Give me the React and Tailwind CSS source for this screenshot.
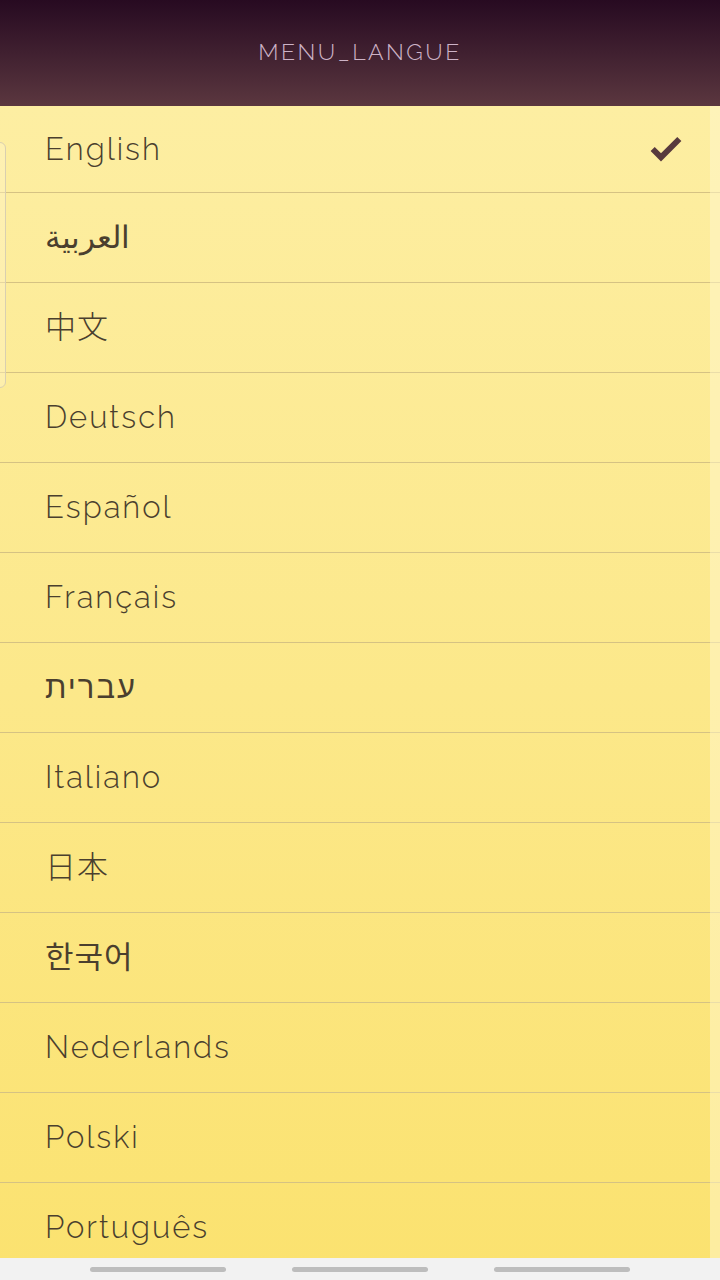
import { Check } from "lucide-react";

const langues = [
  { nom: "English" },
  { nom: "العربية", poids: "font-light", ls: "tracking-normal" },
  { nom: "中文", ls: "tracking-[1px]" },
  { nom: "Deutsch" },
  { nom: "Español" },
  { nom: "Français" },
  { nom: "עברית", poids: "font-normal", ls: "tracking-[2px]" },
  { nom: "Italiano" },
  { nom: "日本", ls: "tracking-[1px]" },
  { nom: "한국어", poids: "font-normal", ls: "tracking-[1px]" },
  { nom: "Nederlands" },
  { nom: "Polski" },
  { nom: "Português" },
];

export default function App() {
  return (
    <div
      className="relative w-[720px] h-[1280px] overflow-hidden flex flex-col"
      style={{ fontFamily: "Raleway, Lato, 'Noto Sans', 'Noto Sans CJK JP', 'Noto Sans CJK KR', sans-serif" }}
    >
      {/* HEADER */}
      <div className="h-[106px] shrink-0 flex items-center justify-center bg-gradient-to-b from-[#270a21] to-[#5b373f]">
        <span className="text-[23px] font-light tracking-[2.5px] text-[#cdb3c7] -mt-[2px]">
          MENU_LANGUE
        </span>
      </div>

      {/* LISTE */}
      <div className="relative flex-1 flex flex-col bg-gradient-to-b from-[#fdeea2] to-[#fbe26f]">
        {langues.map((l, i) => (
          <div
            key={l.nom}
            className={`${i === 0 ? "h-[87px]" : "h-[90px]"} shrink-0 flex items-center justify-between pl-[45px] pr-[34px] border-b border-[#d5c283]`}
          >
            <span className={`text-[31px] text-[#4a3f2e] ${l.poids || "font-light"} ${l.ls || "tracking-[2px]"}`}>
              {l.nom}
            </span>
            {i === 0 && (
              <Check
                size={40}
                strokeWidth={3.5}
                className="text-[#583a3d]"
                strokeLinecap="butt"
                strokeLinejoin="miter"
              />
            )}
          </div>
        ))}
        <div className="absolute top-0 right-0 bottom-0 w-[10px] bg-[#fff8d0] opacity-50" />
        <div className="absolute left-[-8px] top-[36px] w-[14px] h-[246px] rounded-[6px] border border-[#d9cfb0] bg-[#fff6cc]/40" />
      </div>

      {/* NAV */}
      <div className="absolute bottom-0 left-0 right-0 h-[22px] bg-[#f2f2f2] flex items-center justify-center gap-[66px]">
        <div className="w-[136px] h-[5px] rounded-full bg-[#bdbdbd]" />
        <div className="w-[136px] h-[5px] rounded-full bg-[#bdbdbd]" />
        <div className="w-[136px] h-[5px] rounded-full bg-[#bdbdbd]" />
      </div>
    </div>
  );
}
